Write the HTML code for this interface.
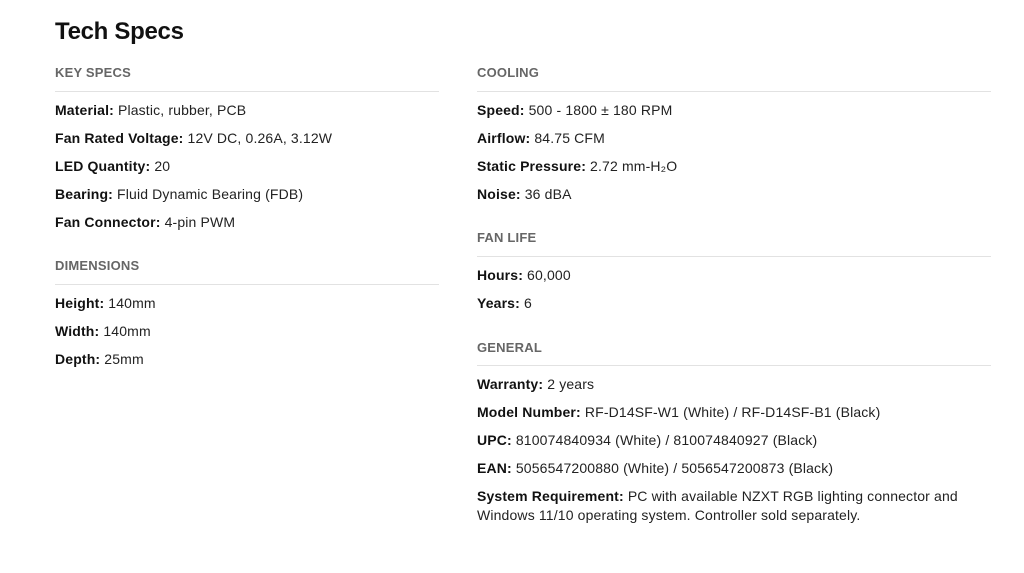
<!DOCTYPE html>
<html><head><meta charset="utf-8"><style>
body{margin:0;width:1024px;height:573px;background:#fff;font-family:"Liberation Sans",sans-serif;color:#222;position:relative;overflow:hidden}
.a{position:absolute;white-space:nowrap;font-size:14px;line-height:19px;letter-spacing:0.15px}
h1{position:absolute;left:55px;top:18px;margin:0;font-size:24px;font-weight:bold;color:#111;letter-spacing:-0.3px}
.h{position:absolute;font-size:13px;font-weight:bold;color:#666;letter-spacing:0.2px}
.l{position:absolute;height:1px;background:#e2e2e2}
b{color:#111}
</style></head><body>
<h1>Tech Specs</h1>
<div class="h" style="left:55px;top:65px">KEY SPECS</div>
<div class="l" style="left:55px;top:91px;width:384px"></div>
<div class="a" style="left:55px;top:101px"><b>Material:</b> Plastic, rubber, PCB</div>
<div class="a" style="left:55px;top:129px"><b>Fan Rated Voltage:</b> 12V DC, 0.26A, 3.12W</div>
<div class="a" style="left:55px;top:157px"><b>LED Quantity:</b> 20</div>
<div class="a" style="left:55px;top:185px"><b>Bearing:</b> Fluid Dynamic Bearing (FDB)</div>
<div class="a" style="left:55px;top:213px"><b>Fan Connector:</b> 4-pin PWM</div>
<div class="h" style="left:55px;top:258px">DIMENSIONS</div>
<div class="l" style="left:55px;top:284px;width:384px"></div>
<div class="a" style="left:55px;top:294px"><b>Height:</b> 140mm</div>
<div class="a" style="left:55px;top:322px"><b>Width:</b> 140mm</div>
<div class="a" style="left:55px;top:350px"><b>Depth:</b> 25mm</div>

<div class="h" style="left:477px;top:65px">COOLING</div>
<div class="l" style="left:477px;top:91px;width:514px"></div>
<div class="a" style="left:477px;top:101px"><b>Speed:</b> 500 - 1800 ± 180 RPM</div>
<div class="a" style="left:477px;top:129px"><b>Airflow:</b> 84.75 CFM</div>
<div class="a" style="left:477px;top:157px"><b>Static Pressure:</b> 2.72 mm-H₂O</div>
<div class="a" style="left:477px;top:185px"><b>Noise:</b> 36 dBA</div>
<div class="h" style="left:477px;top:230px">FAN LIFE</div>
<div class="l" style="left:477px;top:256px;width:514px"></div>
<div class="a" style="left:477px;top:266px"><b>Hours:</b> 60,000</div>
<div class="a" style="left:477px;top:294px"><b>Years:</b> 6</div>
<div class="h" style="left:477px;top:340px">GENERAL</div>
<div class="l" style="left:477px;top:365px;width:514px"></div>
<div class="a" style="left:477px;top:375px"><b>Warranty:</b> 2 years</div>
<div class="a" style="left:477px;top:403px"><b>Model Number:</b> RF-D14SF-W1 (White) / RF-D14SF-B1 (Black)</div>
<div class="a" style="left:477px;top:431px"><b>UPC:</b> 810074840934 (White) / 810074840927 (Black)</div>
<div class="a" style="left:477px;top:459px"><b>EAN:</b> 5056547200880 (White) / 5056547200873 (Black)</div>
<div class="a" style="left:477px;top:487px"><b>System Requirement:</b> PC with available NZXT RGB lighting connector and<br>Windows 11/10 operating system. Controller sold separately.</div>
</body></html>
